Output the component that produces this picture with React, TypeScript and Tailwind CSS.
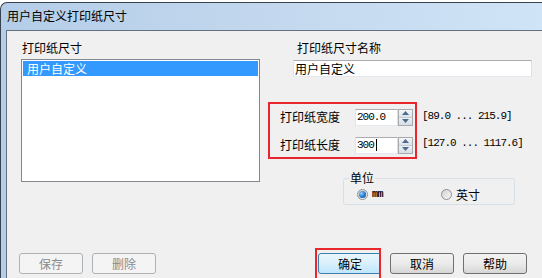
import React from 'react';

const cjk = { fontFamily: '"Noto Sans CJK SC", "Noto Sans", sans-serif' };
const mono = { fontFamily: '"Liberation Mono", "DejaVu Sans Mono", monospace' };

function Spinner() {
  return (
    <div className="flex h-[17px] w-[15px] flex-col border border-[#a7abb0] bg-[#eef1f4]">
      <div className="flex flex-1 items-center justify-center border-b border-[#c5cad0] bg-gradient-to-b from-[#f4f6f8] to-[#dde3ea]">
        <svg width="7" height="4" viewBox="0 0 7 4">
          <path d="M0 4 L3.5 0 L7 4 Z" fill="#4d6a8f" />
        </svg>
      </div>
      <div className="flex flex-1 items-center justify-center bg-gradient-to-b from-[#eef1f4] to-[#d6dde5]">
        <svg width="7" height="4" viewBox="0 0 7 4">
          <path d="M0 0 L3.5 4 L7 0 Z" fill="#4d6a8f" />
        </svg>
      </div>
    </div>
  );
}

function NumField({ value, caret }: { value: string; caret?: boolean }) {
  return (
    <div className="flex items-stretch">
      <div
        className="flex h-[17px] w-[43px] items-center border border-[#abadb3] border-r-[#dbdfe6] border-b-[#e3e9ef] border-l-[#e2e3ea] bg-white pl-[1px] text-[11px] tracking-[-1px] text-black"
        style={mono}
      >
        {value}
        {caret && <span className="ml-[2px] h-[12px] w-[1px] bg-black" />}
      </div>
      <Spinner />
    </div>
  );
}

function Button({
  label,
  disabled,
  isDefault,
}: {
  label: string;
  disabled?: boolean;
  isDefault?: boolean;
}) {
  let tone = 'border-[#707070] bg-gradient-to-b from-[#f2f2f2] via-[#ebebeb] to-[#d6d6d6] text-black';
  if (disabled) tone = 'border-[#adb2b5] bg-[#f4f4f4] text-[#8a8a8a]';
  if (isDefault) tone = 'border-[#3c7fb1] bg-gradient-to-b from-[#eaf6fd] via-[#d9f0fc] to-[#bee6fd] text-black';
  return (
    <div
      className={`flex h-[21px] w-[64px] shrink-0 items-center justify-center rounded-[3px] border text-[12px] ${tone}`}
      style={cjk}
    >
      {label}
    </div>
  );
}

function Radio({ checked }: { checked?: boolean }) {
  return (
    <span className="flex h-[11px] w-[11px] items-center justify-center rounded-full border border-[#8e8f8f] bg-gradient-to-br from-[#d4d4d4] to-[#f6f6f6]">
      {checked && (
        <span className="h-[7px] w-[7px] rounded-full bg-[radial-gradient(circle_at_35%_35%,#8fd0ff,#1a6fbf_60%,#0d4a8c)]" />
      )}
    </span>
  );
}

export default function App() {
  return (
    <div className="h-[278px] w-[542px] overflow-hidden bg-white" style={cjk}>
      <div className="mt-[2px] rounded-tl-[7px] border-t border-l border-[#39434f] bg-gradient-to-r from-[#b4cde8] via-[#c3d8ee] to-[#d0e4f7]">
        {/* Title bar */}
        <div className="flex h-[27px] items-center pb-[2px] pl-[6px] text-[12px] text-black">
          用户自定义打印纸尺寸
        </div>

        <div className="flex">
          <div className="w-[5px] shrink-0" />

          {/* Client area */}
          <div className="h-[260px] flex-1 border-t border-l border-[#64707d] bg-[#f0f0f0] text-[12px] text-black">
            <div className="flex items-start">
              {/* Left column */}
              <div className="ml-[14px] w-[239px] shrink-0">
                <div className="mt-[9px] h-[16px] pl-[1px] leading-[16px]">打印纸尺寸</div>
                <div className="mt-[3px] h-[123px] border border-[#828790] bg-white p-[1px]">
                  <div className="h-[15px] bg-[#3399ff] pl-[4px] leading-[15px] text-white">用户自定义</div>
                </div>
              </div>

              {/* Right column */}
              <div className="ml-[8px] flex-1">
                <div className="mt-[9px] ml-[29px] h-[16px] leading-[16px]">打印纸尺寸名称</div>
                <div className="mt-[4px] ml-[25px] flex h-[17px] w-[239px] items-center border border-[#abadb3] border-r-[#dbdfe6] border-b-[#e3e9ef] border-l-[#e2e3ea] bg-white pl-[1px]">
                  用户自定义
                </div>

                <div className="mt-[25px] flex items-start">
                  <div className="flex w-[149px] flex-col gap-[10px] border-2 border-[#e8262b] pt-[4px] pb-[3px] pl-[10px]">
                    <div className="flex items-center">
                      <span className="w-[75px]">打印纸宽度</span>
                      <NumField value="200.0" />
                    </div>
                    <div className="flex items-center">
                      <span className="w-[75px]">打印纸长度</span>
                      <NumField value="300" caret />
                    </div>
                  </div>
                  <div className="ml-[5px] flex flex-col gap-[10px] pt-[6px] text-[11px] tracking-[-1px]" style={mono}>
                    <div className="flex h-[17px] items-center">[89.0 ... 215.9]</div>
                    <div className="flex h-[17px] items-center">[127.0 ... 1117.6]</div>
                  </div>
                </div>

                <fieldset className="mt-[13px] ml-[75px] w-[172px] rounded-[3px] border border-[#d5dfe5] pb-[4px]">
                  <legend className="ml-[5px] px-[1px] text-[12px] leading-[12px]">单位</legend>
                  <div className="mt-[5px] flex h-[11px] items-center pl-[13px]">
                    <Radio checked />
                    <span className="ml-[4px] text-[10px] font-bold leading-[11px] tracking-[-0.5px] text-black" style={mono}>
                      mm
                    </span>
                    <span className="ml-[58px]">
                      <Radio />
                    </span>
                    <span className="ml-[4px] leading-[12px]">英寸</span>
                  </div>
                </fieldset>
              </div>
            </div>

            {/* Button row */}
            <div className="mt-[43px] flex items-start">
              <div className="mt-[5px] ml-[12px] flex gap-[9px]">
                <Button label="保存" disabled />
                <Button label="删除" disabled />
              </div>
              <div className="ml-[159px] h-[40px] w-[66px] shrink-0 overflow-hidden border-2 border-[#e8262b] pt-[3px] pl-[1px]">
                <Button label="确定" isDefault />
              </div>
              <div className="mt-[5px] ml-[9px] flex gap-[9px]">
                <Button label="取消" />
                <Button label="帮助" />
              </div>
            </div>
          </div>
        </div>
      </div>
    </div>
  );
}
